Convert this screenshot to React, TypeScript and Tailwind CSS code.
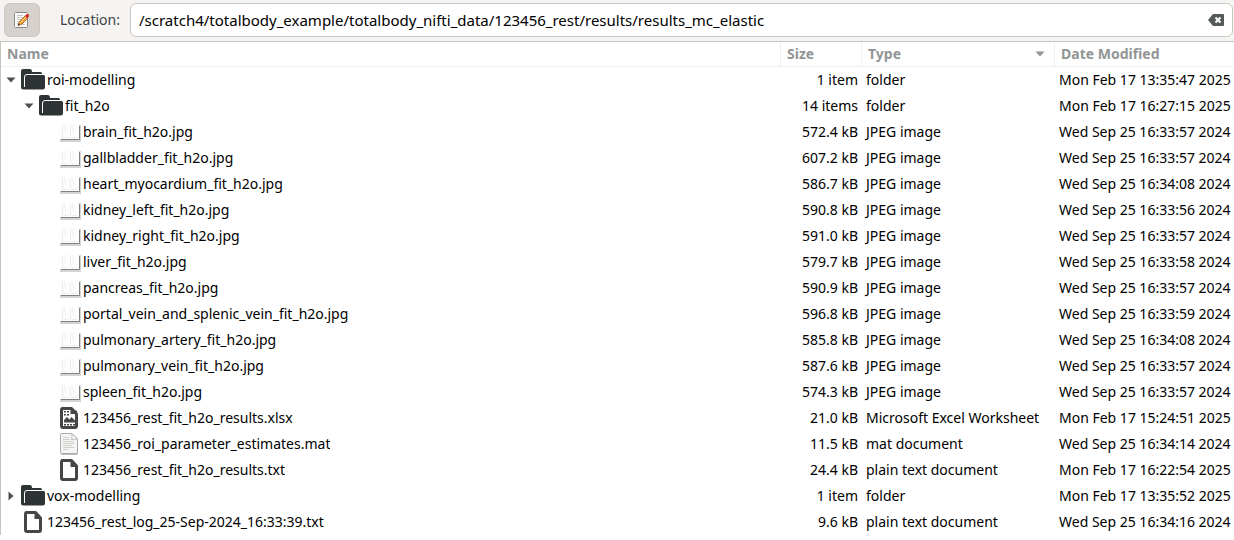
import { useState } from "react";

type Kind = "folder" | "image" | "sheet" | "mat" | "text";

interface Entry {
  name: string;
  kind: Kind;
  level: 0 | 1 | 2;
  size: string;
  type: string;
  date: string;
  parent?: string;
}

const jpeg = (name: string, size: string, time: string): Entry => ({
  name: name + "_fit_h2o.jpg",
  kind: "image",
  level: 2,
  size: size + " kB",
  type: "JPEG image",
  date: "Wed Sep 25 " + time + " 2024",
  parent: "fit_h2o",
});

const entries: Entry[] = [
  { name: "roi-modelling", kind: "folder", level: 0, size: "1 item", type: "folder", date: "Mon Feb 17 13:35:47 2025" },
  { name: "fit_h2o", kind: "folder", level: 1, size: "14 items", type: "folder", date: "Mon Feb 17 16:27:15 2025", parent: "roi-modelling" },
  jpeg("brain", "572.4", "16:33:57"),
  jpeg("gallbladder", "607.2", "16:33:57"),
  jpeg("heart_myocardium", "586.7", "16:34:08"),
  jpeg("kidney_left", "590.8", "16:33:56"),
  jpeg("kidney_right", "591.0", "16:33:57"),
  jpeg("liver", "579.7", "16:33:58"),
  jpeg("pancreas", "590.9", "16:33:57"),
  jpeg("portal_vein_and_splenic_vein", "596.8", "16:33:59"),
  jpeg("pulmonary_artery", "585.8", "16:34:08"),
  jpeg("pulmonary_vein", "587.6", "16:33:57"),
  jpeg("spleen", "574.3", "16:33:57"),
  { name: "123456_rest_fit_h2o_results.xlsx", kind: "sheet", level: 2, size: "21.0 kB", type: "Microsoft Excel Worksheet", date: "Mon Feb 17 15:24:51 2025", parent: "fit_h2o" },
  { name: "123456_roi_parameter_estimates.mat", kind: "mat", level: 2, size: "11.5 kB", type: "mat document", date: "Wed Sep 25 16:34:14 2024", parent: "fit_h2o" },
  { name: "123456_rest_fit_h2o_results.txt", kind: "text", level: 2, size: "24.4 kB", type: "plain text document", date: "Mon Feb 17 16:22:54 2025", parent: "fit_h2o" },
  { name: "vox-modelling", kind: "folder", level: 0, size: "1 item", type: "folder", date: "Mon Feb 17 13:35:52 2025" },
  { name: "123456_rest_log_25-Sep-2024_16:33:39.txt", kind: "text", level: 0, size: "9.6 kB", type: "plain text document", date: "Wed Sep 25 16:34:16 2024" },
];

const indent = { 0: "pl-0.5", 1: "pl-5", 2: "pl-[38px]" };

function EntryIcon({ kind }: { kind: Kind }) {
  return (
    <svg width="24" height="24" viewBox="0 0 24 24" className="shrink-0" aria-hidden="true">
      {kind === "folder" && (
        <>
          <path d="M0 3 Q0 1 2 1 H9 Q10.5 1 10.8 2.5 L11 4 H19.5 Q21 4 21 5.5 V7 H22.5 Q24 7 24 8.500 V19 Q24 21.500 21.500 21.500 H2 Q0 21.500 0 19.500 Z" fill="#2e3436" />
          <path d="M3.500 19 V9 Q3.500 6.500 6 6.500 H21" fill="none" stroke="#fff" strokeWidth="1" />
        </>
      )}
      {kind === "image" && (
        <>
          <path d="M3 20.500 H22.500 V5" fill="none" stroke="#d4d4d4" strokeWidth="3" />
          <path d="M4 19.500 H22.500 V6" fill="none" stroke="#808080" strokeWidth="1" />
          <rect x="4" y="4" width="18" height="15" fill="#fdfdfd" />
          <path d="M5.500 6 V17 M13.500 6 V17 M5 17.500 H11 M14 17.500 H20" fill="none" stroke="#ececec" />
          <path d="M7 5 L8 10 L9 13 M15 5 L16 10 L17 13" fill="none" stroke="#f1f1f1" />
        </>
      )}
      {(kind === "text" || kind === "sheet") && (
        <path d="M5 2.500 H14.500 L19.500 8 V20 Q19.500 21.500 18 21.500 H6 Q4.500 21.500 4.500 20 V4 Q4.500 2.500 6 2.500 Z" fill="#fff" stroke="#464646" strokeWidth="3" strokeLinejoin="round" />
      )}
      {kind === "text" && <path d="M13.500 3 V9 H20 Z" fill="#464646" />}
      {kind === "sheet" && (
        <>
          <path d="M13.500 2 V8 H20 V5 Z" fill="#464646" />
          <path d="M7 5 h2 v1.500 h-2z M10 5 h2 v1.500 h-2z M7 8 h2 v1.500 h-2z M10 8 h2 v1.500 h-2z M7 18 h2 v1.500 h-2z M10 18 h2 v1.500 h-2z M13 18 h2 v1.500 h-2z M16 18 h2 v1.500 h-2z" fill="#464646" />
          <path d="M7 16.500 V14 L10 11 L12.500 13.500 L14.500 11 L18 14.500 V16.500 Z" fill="#464646" />
        </>
      )}
      {kind === "mat" && (
        <>
          <path d="M4.500 1.500 H15 L20.500 7 V21.500 H4.500 Q3.500 21.500 3.500 20.500 V2.500 Q3.500 1.500 4.500 1.500 Z" fill="#f4f4f2" stroke="#a9aba8" />
          <path d="M4 22.500 H20.500" stroke="#bbbbbb" />
          <path d="M15 1.500 Q15.500 5 14.500 7.500 Q18 6.500 20.500 7.500 Z" fill="#fff" stroke="#b9bbb8" />
          <path d="M6 5.500 H12 M6 7.500 H13 M6 9.500 H17 M6 11.500 H17 M6 13.500 H15 M6 15.500 H17 M6 17.500 H11" stroke="#cfd1ce" />
        </>
      )}
    </svg>
  );
}

function EditIcon() {
  return (
    <svg width="16" height="16" viewBox="0 0 16 16" aria-hidden="true">
      <rect x="0.500" y="0.500" width="13" height="15" rx="1" fill="#fafafa" stroke="#888a85" />
      <path d="M3 3.500 H9 M3 5.500 H9 M3 7.500 H7 M3 9.500 H6 M3 11.500 H5 M8 12.500 H11" stroke="#c5c7c3" />
      <path d="M4 13.500 L5.500 9.500 L11.500 3.500 L14 6 L8 12 Z" fill="#f0a13c" stroke="#a65e12" strokeWidth="0.8" />
      <path d="M6.500 10.500 L12.500 4.500" stroke="#fbd18c" />
      <path d="M11 4 L12.500 2.200 Q13.500 1.500 14.500 2.500 Q15.700 3.500 14.700 4.700 L13.300 6.200 Z" fill="#d9252a" />
      <path d="M3.800 13.700 L4.500 11.600 L6 13 Z" fill="#333" />
    </svg>
  );
}

function DownArrow({ className }: { className: string }) {
  return (
    <svg width="10" height="6" viewBox="0 0 10 6" className={className} aria-hidden="true">
      <path d="M0.500 0.500 H9.500 L5 5.500 Z" fill="currentColor" />
    </svg>
  );
}

const headCell = "h-[25px] border-b border-[#f0f0f0] p-0 text-left font-bold text-[#929595]";

export default function App() {
  const [location, setLocation] = useState("/scratch4/totalbody_example/totalbody_nifti_data/123456_rest/results/results_mc_elastic");
  const [editing, setEditing] = useState(true);
  const [open, setOpen] = useState<string[]>(["roi-modelling", "fit_h2o"]);

  const visible = (e: Entry): boolean => {
    if (!e.parent) return true;
    const parent = entries.find((p) => p.name === e.parent);
    return open.includes(e.parent) && (!parent || visible(parent));
  };
  const toggle = (name: string) =>
    setOpen((list) => (list.includes(name) ? list.filter((n) => n !== name) : [...list, name]));

  return (
    <div className="min-h-screen bg-white font-['Noto_Sans',sans-serif] text-sm leading-5 text-black">
      <header className="flex items-center bg-[#f5f4f2] pt-[3px] pr-px pb-1 pl-1">
        <button
          type="button"
          aria-label="Edit location"
          aria-pressed={editing}
          onClick={() => setEditing(!editing)}
          className="flex h-[34px] w-9 shrink-0 items-center justify-center rounded-md border border-[#cdc7c2] bg-[#d6d1cd]"
        >
          <EditIcon />
        </button>
        <label htmlFor="location" className="w-[90px] shrink-0 pl-5 text-[#3d4244]">
          Location:
        </label>
        <div className="flex h-[34px] min-w-0 flex-1 items-center rounded-md border border-[#cdc7c2] bg-white px-2">
          <input
            id="location"
            type="text"
            value={location}
            readOnly={!editing}
            onChange={(e) => setLocation(e.target.value)}
            className="min-w-0 flex-1 bg-transparent text-[15px] outline-none"
          />
          <button type="button" aria-label="Clear location" onClick={() => setLocation("")} className="shrink-0">
            <svg width="16" height="12" viewBox="0 0 16 12" className="block" aria-hidden="true">
              <path d="M5 0 H15 Q16 0 16 1 V11 Q16 12 15 12 H5 L0 6 Z" fill="#555a5b" />
              <path d="M7.500 3.500 L12.500 8.500 M12.500 3.500 L7.500 8.500" stroke="#fff" strokeWidth="2" />
            </svg>
          </button>
        </div>
      </header>
      <main className="border-t border-l border-[#c9c3bd]">
        <table className="w-full table-fixed border-separate border-spacing-0 whitespace-nowrap">
          <colgroup>
            <col />
            <col className="w-[81px]" />
            <col className="w-[193px]" />
            <col className="w-[180px]" />
          </colgroup>
          <thead>
            <tr>
              <th scope="col" className={headCell}>
                <button type="button" className="flex w-full items-center px-1.5">Name</button>
              </th>
              <th scope="col" className={headCell + " border-l"}>
                <button type="button" className="flex w-full items-center px-1.5">Size</button>
              </th>
              <th scope="col" aria-sort="ascending" className={headCell + " border-l"}>
                <button type="button" className="flex w-full items-center justify-between pr-[9px] pl-1.5">
                  Type
                  <DownArrow className="text-[#929595]" />
                </button>
              </th>
              <th scope="col" className={headCell + " border-l"}>
                <button type="button" className="flex w-full items-center px-1.5">Date Modified</button>
              </th>
            </tr>
          </thead>
          <tbody>
            {entries.filter(visible).map((e) => (
              <tr key={e.name} className="h-[26px]">
                <td className="p-0">
                  <div className={"flex items-center " + indent[e.level]}>
                    {e.kind === "folder" ? (
                      <button
                        type="button"
                        aria-label={"Toggle " + e.name}
                        aria-expanded={open.includes(e.name)}
                        onClick={() => toggle(e.name)}
                        className="mr-0.5 flex h-4 w-4 shrink-0 items-center justify-center text-[#4c5052]"
                      >
                        <DownArrow className={open.includes(e.name) ? "" : "-rotate-90"} />
                      </button>
                    ) : (
                      <span className="mr-0.5 w-4 shrink-0" />
                    )}
                    <EntryIcon kind={e.kind} />
                    <span className="truncate pl-0.5">{e.name}</span>
                  </div>
                </td>
                <td className="p-0 pr-[3px] text-right">{e.size}</td>
                <td className="p-0 pl-[5px]">{e.type}</td>
                <td className="p-0 pl-[5px]">{e.date}</td>
              </tr>
            ))}
          </tbody>
        </table>
      </main>
    </div>
  );
}
